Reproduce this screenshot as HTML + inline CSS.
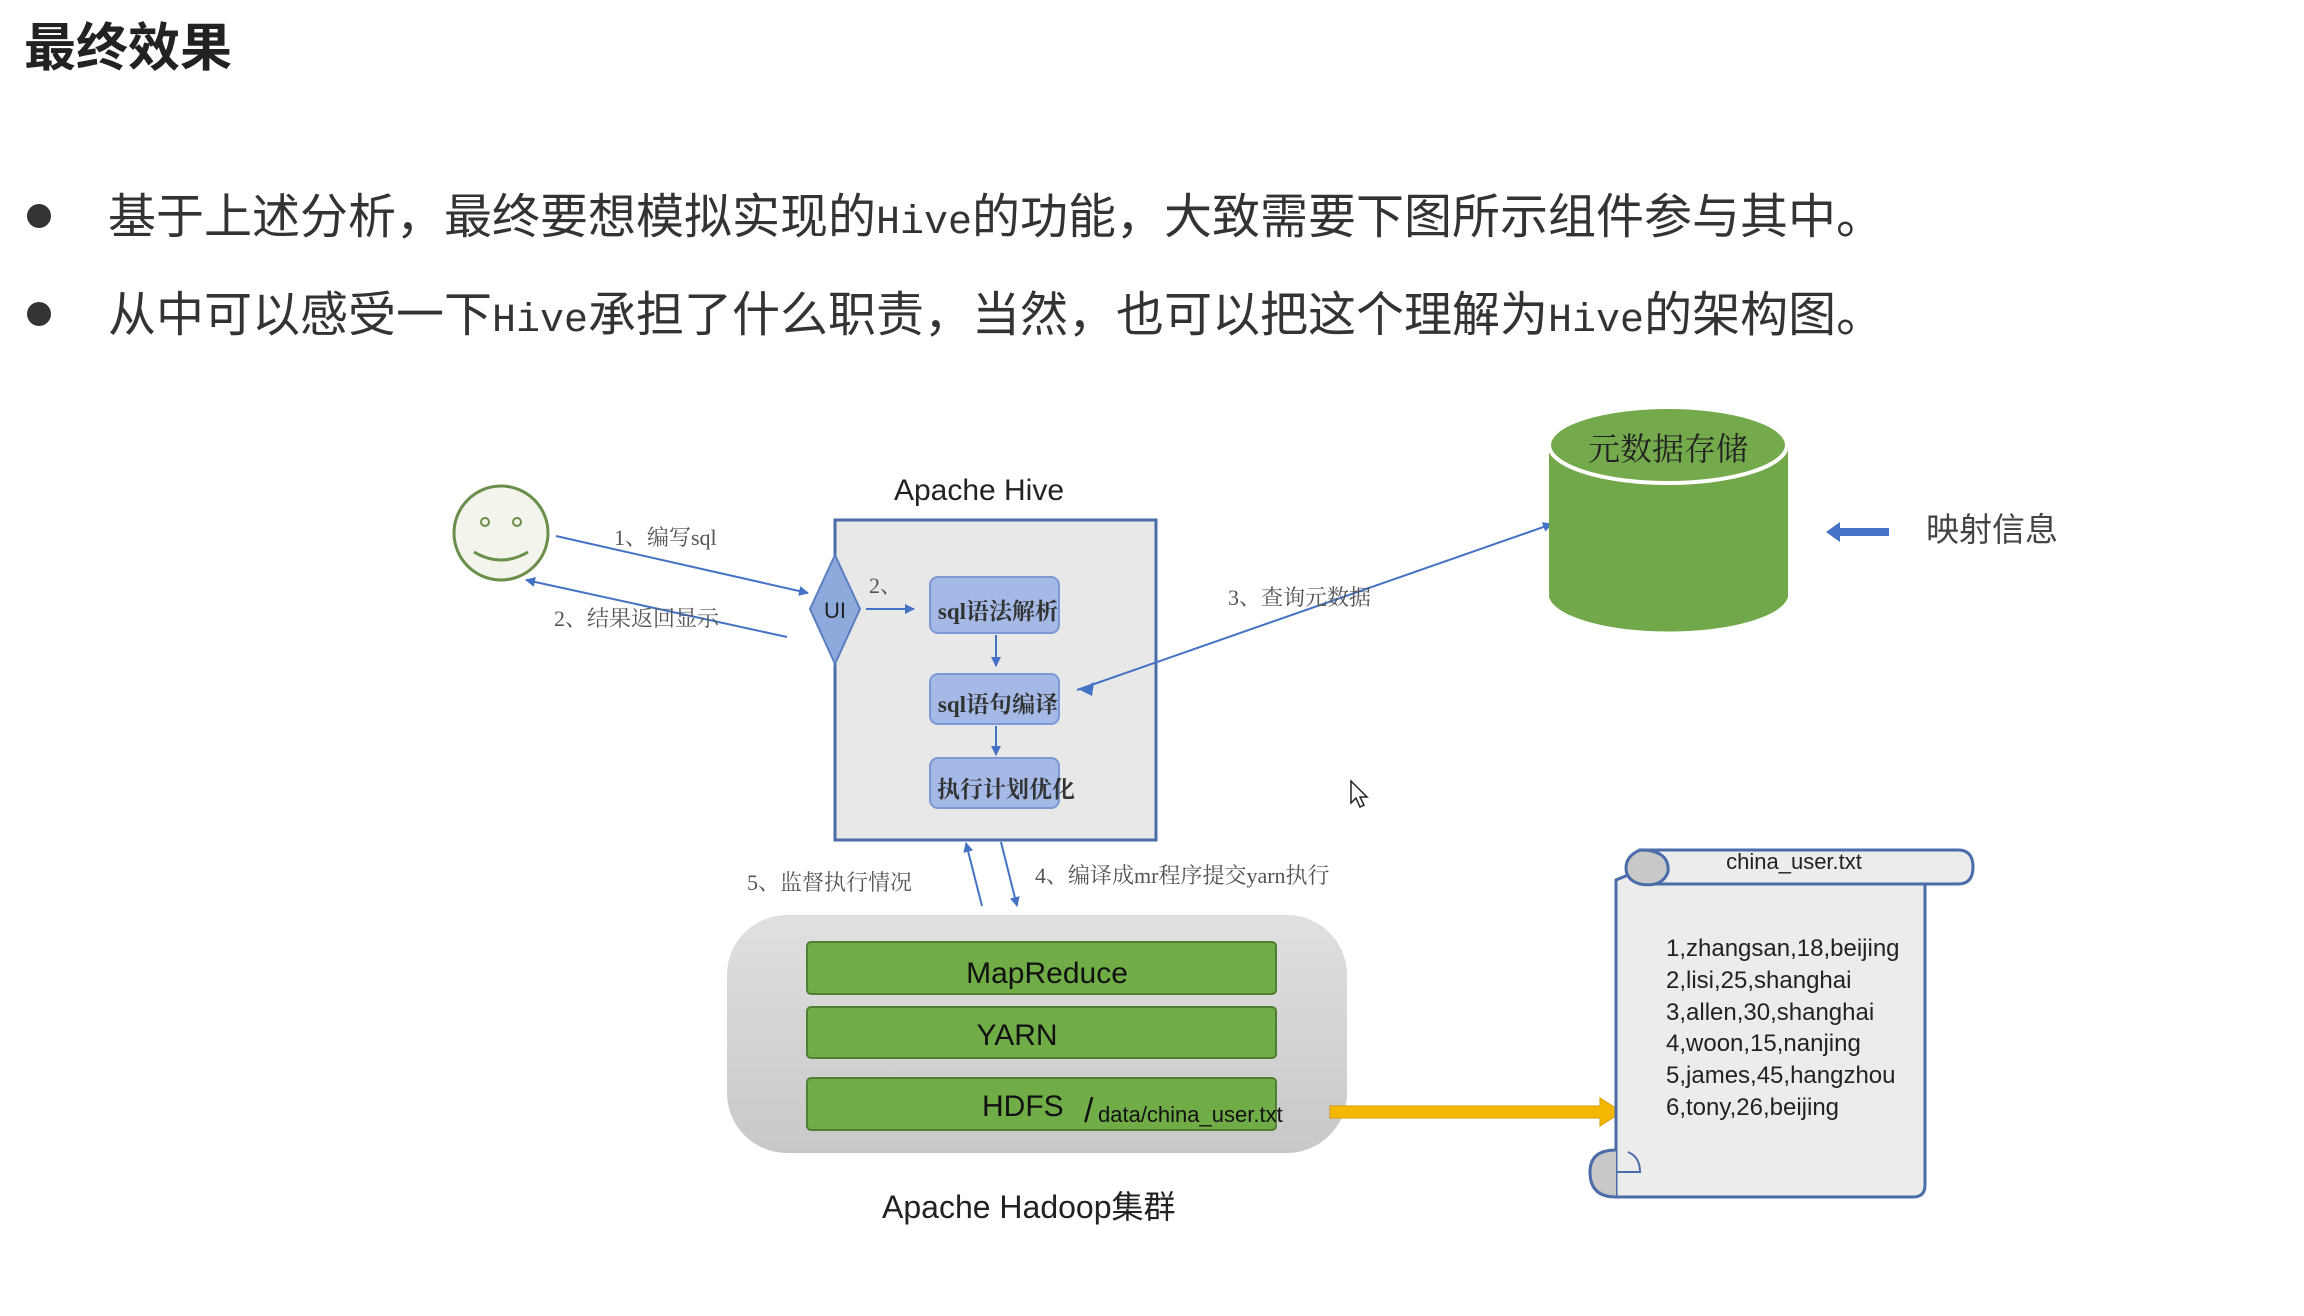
<!DOCTYPE html>
<html><head><meta charset="utf-8"><style>
html,body{margin:0;padding:0;background:#fff;width:2304px;height:1316px;overflow:hidden}
svg{display:block}
.cj{font-family:"Liberation Sans","Noto Sans CJK SC",sans-serif}
.sf{font-family:"Liberation Serif","Noto Serif CJK SC",serif}
</style></head><body>
<svg width="2304" height="1316" viewBox="0 0 2304 1316" xmlns="http://www.w3.org/2000/svg">
<defs>
<marker id="ah" viewBox="0 0 10 10" refX="9" refY="5" markerWidth="5" markerHeight="5" orient="auto-start-reverse"><path d="M0,0 L10,5 L0,10 z" fill="#4472c4"/></marker>
<linearGradient id="hg" x1="0" y1="0" x2="0" y2="1"><stop offset="0" stop-color="#e0e0e0"/><stop offset="1" stop-color="#c8c8c8"/></linearGradient>
</defs>
<text x="24" y="66" class="cj" font-size="52" font-weight="bold" fill="#222">最终效果</text>
<circle cx="39" cy="216" r="12" fill="#333"/>
<circle cx="39" cy="314" r="12" fill="#333"/>
<text x="108" y="233" class="cj" font-size="48" fill="#333">基于上述分析，最终要想模拟实现的<tspan font-family="Liberation Mono,monospace" font-size="40">Hive</tspan>的功能，大致需要下图所示组件参与其中。</text>
<text x="108" y="331" class="cj" font-size="48" fill="#333">从中可以感受一下<tspan font-family="Liberation Mono,monospace" font-size="40">Hive</tspan>承担了什么职责，当然，也可以把这个理解为<tspan font-family="Liberation Mono,monospace" font-size="40">Hive</tspan>的架构图。</text>

<!-- smiley -->
<circle cx="501" cy="533" r="47" fill="#f3f4ec" stroke="#6a8f4a" stroke-width="3"/>
<circle cx="485" cy="522" r="4" fill="none" stroke="#6a8f4a" stroke-width="2"/>
<circle cx="517" cy="522" r="4" fill="none" stroke="#6a8f4a" stroke-width="2"/>
<path d="M474,552 Q501,568 528,552" fill="none" stroke="#6a8f4a" stroke-width="3"/>

<!-- Hive box -->
<text x="979" y="500" text-anchor="middle" class="cj" font-size="30" fill="#222">Apache Hive</text>
<rect x="835" y="520" width="321" height="320" fill="#e8e8e8" stroke="#4a6ca8" stroke-width="3"/>
<polygon points="835,555 860,609 835,664 810,609" fill="#8ea9db" stroke="#5b7fc0" stroke-width="2"/>
<text x="835" y="618" text-anchor="middle" class="cj" font-size="22" fill="#222">UI</text>
<rect x="930" y="577" width="129" height="56" rx="8" fill="#a4b9e6" stroke="#7d98d4" stroke-width="2"/>
<rect x="930" y="674" width="129" height="50" rx="8" fill="#a4b9e6" stroke="#7d98d4" stroke-width="2"/>
<rect x="930" y="758" width="129" height="50" rx="8" fill="#a4b9e6" stroke="#7d98d4" stroke-width="2"/>
<text x="998" y="619" text-anchor="middle" class="sf" font-size="23" font-weight="bold" fill="#333">sql语法解析</text>
<text x="998" y="712" text-anchor="middle" class="sf" font-size="23" font-weight="bold" fill="#333">sql语句编译</text>
<text x="1006" y="797" text-anchor="middle" class="sf" font-size="23" font-weight="bold" fill="#333">执行计划优化</text>

<g stroke="#4472c4" stroke-width="2" fill="none" marker-end="url(#ah)">
<line x1="556" y1="536" x2="808" y2="593"/>
<line x1="787" y1="637" x2="526" y2="580"/>
<line x1="866" y1="609" x2="914" y2="609"/>
<line x1="996" y1="635" x2="996" y2="666"/>
<line x1="996" y1="726" x2="996" y2="755"/>
<line x1="1077" y1="690" x2="1552" y2="524"/>
<line x1="982" y1="906" x2="966" y2="843"/>
<line x1="1001" y1="842" x2="1017" y2="906"/>
</g>
<path d="M1080,690 L1094,682 L1092,696 z" fill="#4472c4"/>

<g class="sf" font-size="22" fill="#555">
<text x="614" y="545">1、编写sql</text>
<text x="554" y="626">2、结果返回显示</text>
<text x="869" y="593">2、</text>
<text x="1228" y="605">3、查询元数据</text>
<text x="747" y="890">5、监督执行情况</text>
<text x="1035" y="883">4、编译成mr程序提交yarn执行</text>
</g>

<!-- cylinder -->
<path d="M1549,445 L1549,597 A120,38 0 0 0 1788,597 L1788,445 z" fill="#70a84a"/>
<ellipse cx="1668" cy="445" rx="119" ry="38" fill="#74a94c" stroke="#fff" stroke-width="4"/>
<text x="1668" y="460" text-anchor="middle" class="sf" font-size="32" fill="#222">元数据存储</text>
<path d="M1889,528 L1840,528 L1840,522 L1826,532 L1840,542 L1840,536 L1889,536 z" fill="#4472c4"/>
<text x="1926" y="541" class="cj" font-size="33" fill="#444">映射信息</text>

<!-- hadoop -->
<rect x="727" y="915" width="620" height="238" rx="60" fill="url(#hg)"/>
<rect x="807" y="942" width="469" height="52" rx="4" fill="#70ad47" stroke="#4f7f33" stroke-width="2"/>
<rect x="807" y="1007" width="469" height="51" rx="4" fill="#70ad47" stroke="#4f7f33" stroke-width="2"/>
<rect x="807" y="1078" width="469" height="52" rx="4" fill="#70ad47" stroke="#4f7f33" stroke-width="2"/>
<text x="1047" y="983" text-anchor="middle" class="cj" font-size="30" fill="#111">MapReduce</text>
<text x="1017" y="1045" text-anchor="middle" class="cj" font-size="30" fill="#111">YARN</text>
<text x="982" y="1116" class="cj" font-size="30" fill="#111">HDFS</text>
<text x="1084" y="1122" class="cj" font-size="34" fill="#111">/</text>
<text x="1098" y="1122" class="cj" font-size="22" fill="#111">data/china_user.txt</text>
<text x="882" y="1218" class="cj" font-size="32" fill="#222">Apache Hadoop集群</text>

<!-- yellow arrow -->
<path d="M1330,1106 L1600,1106 L1600,1098 L1622,1112 L1600,1126 L1600,1118 L1330,1118 z" fill="#f5b800" stroke="#d89a00" stroke-width="1"/>

<!-- scroll -->
<path d="M1640,870 L1925,870 L1925,1185 Q1925,1197 1913,1197 L1616,1197 L1616,880 z" fill="#ececec" stroke="#4a6ca8" stroke-width="3"/>
<path d="M1640,850 L1958,850 Q1973,850 1973,867 Q1973,884 1958,884 L1640,884 z" fill="#ececec" stroke="#4a6ca8" stroke-width="3"/>
<path d="M1640,850 Q1670,850 1668,872 Q1662,888 1640,884 Q1626,880 1626,868 Q1626,856 1640,850 z" fill="#c8c8c8" stroke="#4a6ca8" stroke-width="3"/>
<path d="M1616,1150 Q1590,1150 1590,1172 Q1590,1197 1616,1197" fill="#c8c8c8" stroke="#4a6ca8" stroke-width="3"/>
<path d="M1616,1172 L1640,1172 Q1640,1157 1628,1152" fill="none" stroke="#4a6ca8" stroke-width="2"/>
<text x="1794" y="869" text-anchor="middle" class="cj" font-size="22" fill="#222">china_user.txt</text>
<g class="cj" font-size="24" fill="#222">
<text x="1666" y="956">1,zhangsan,18,beijing</text>
<text x="1666" y="988">2,lisi,25,shanghai</text>
<text x="1666" y="1020">3,allen,30,shanghai</text>
<text x="1666" y="1051">4,woon,15,nanjing</text>
<text x="1666" y="1083">5,james,45,hangzhou</text>
<text x="1666" y="1115">6,tony,26,beijing</text>
</g>

<!-- cursor -->
<path d="M1351,781 L1351,803 L1356,798 L1360,807 L1364,805 L1360,797 L1367,797 z" fill="#fff" stroke="#222" stroke-width="1.5"/>
</svg>
</body></html>
